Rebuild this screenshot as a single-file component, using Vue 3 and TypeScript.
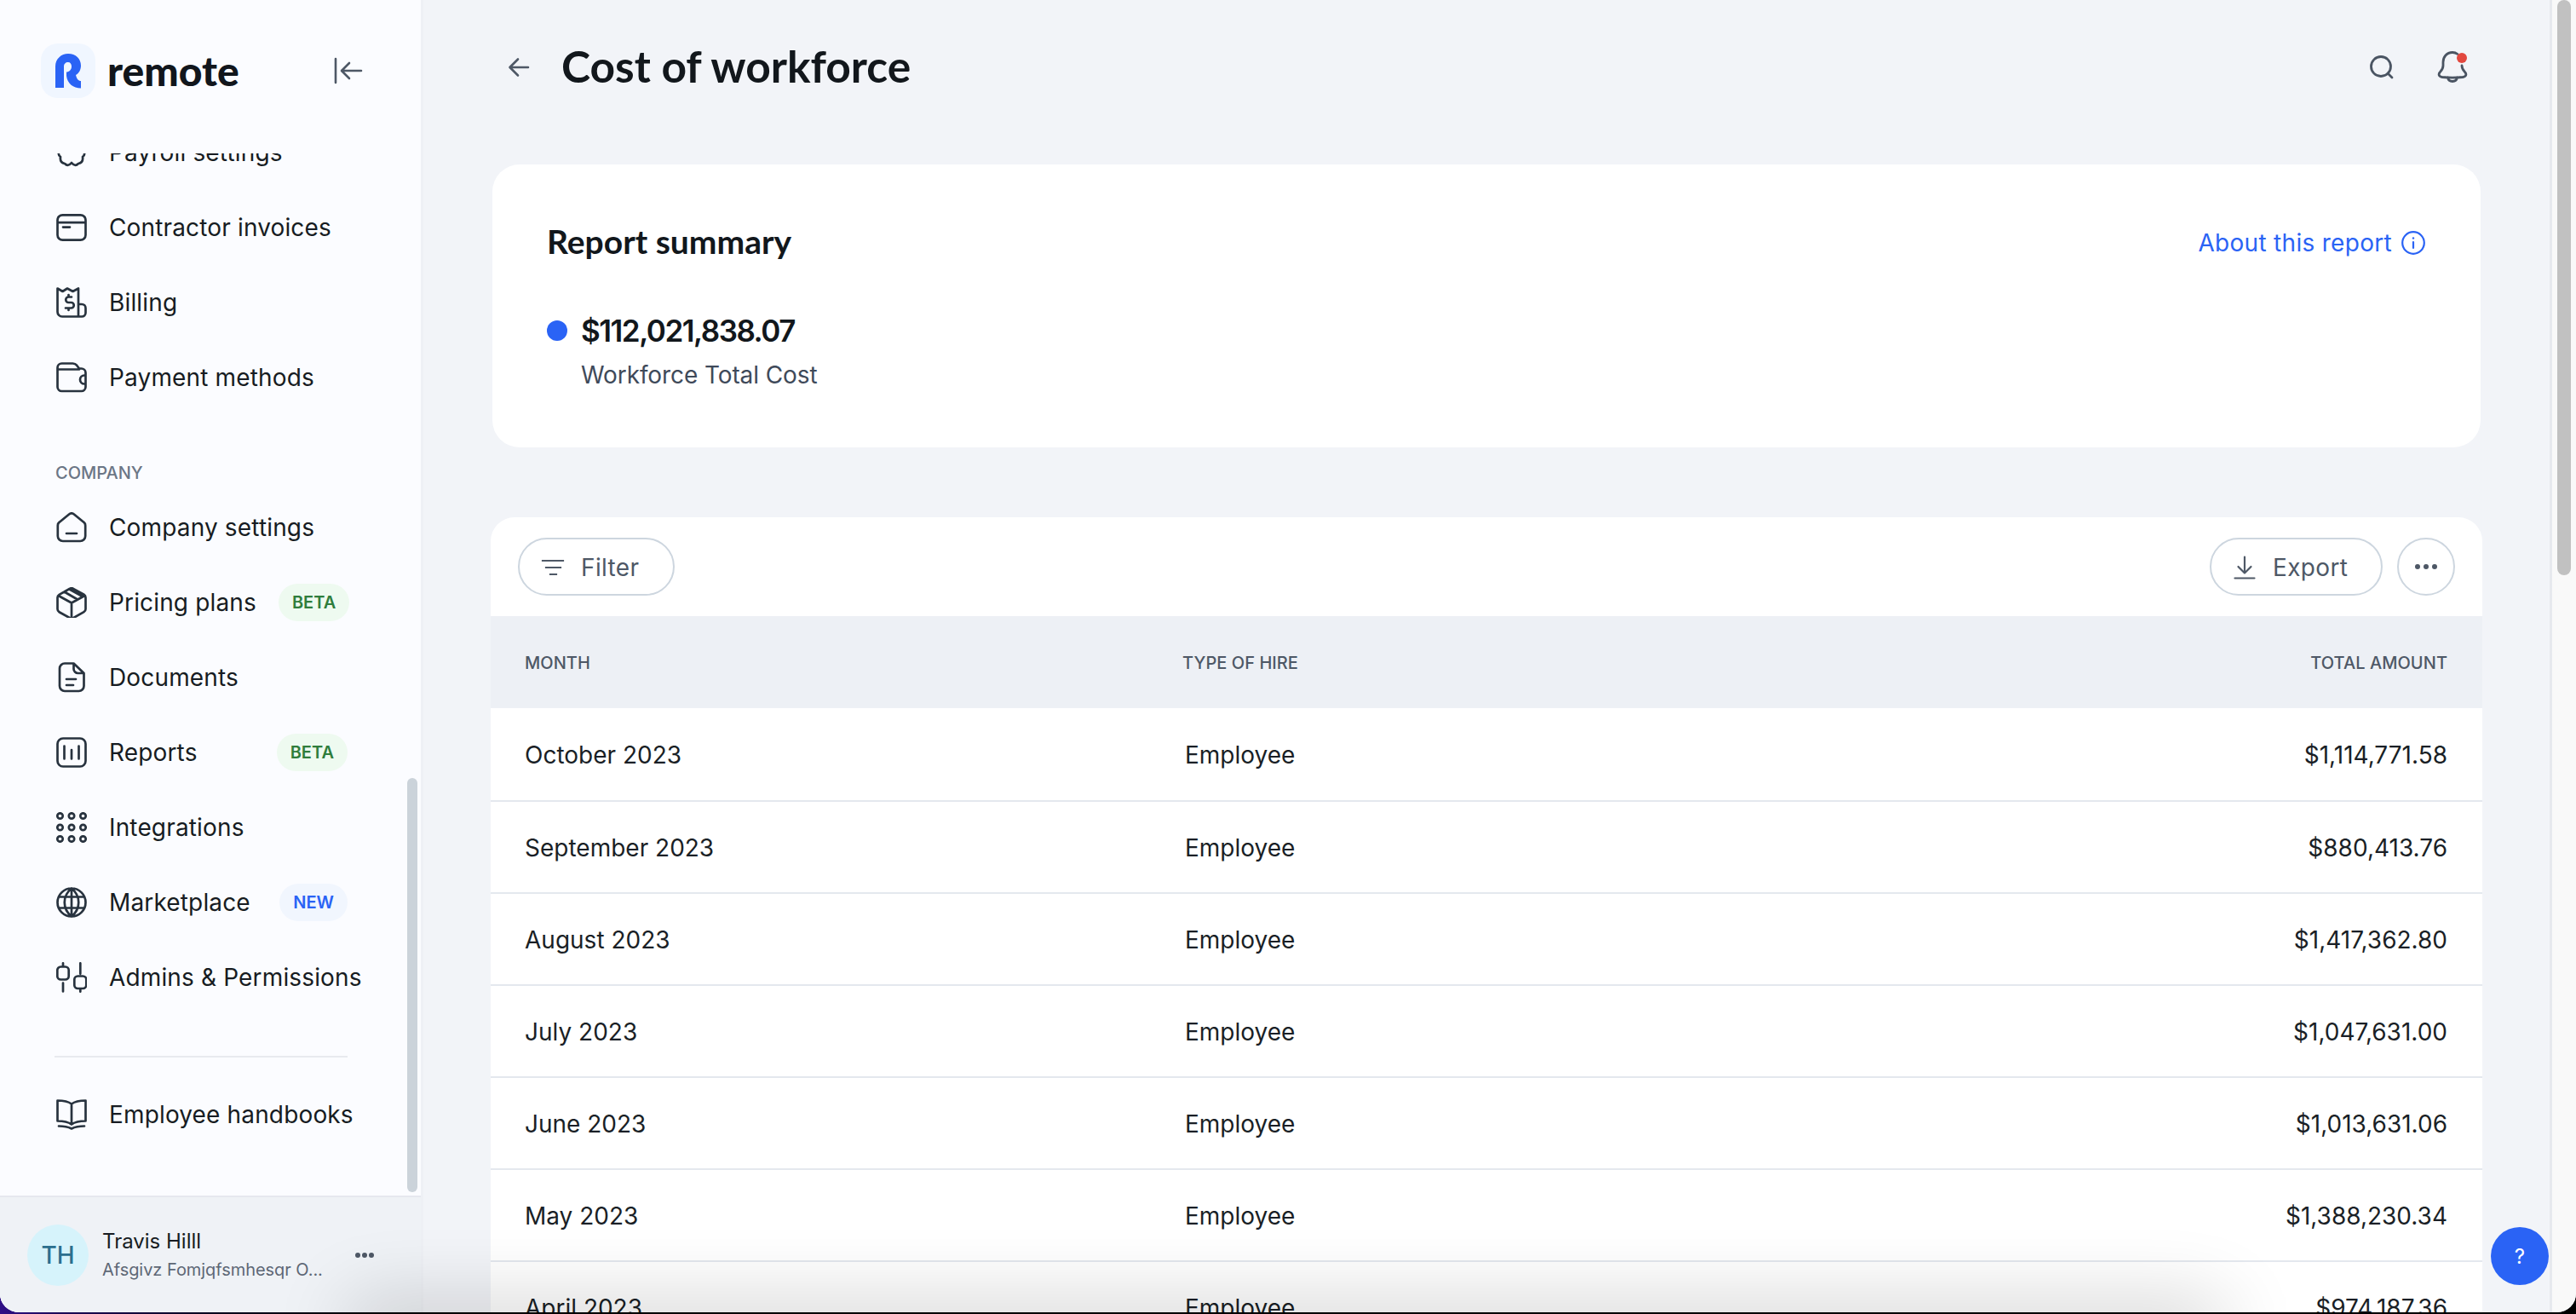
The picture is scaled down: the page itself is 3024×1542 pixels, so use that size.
<script setup lang="ts">
interface NavItem {
  label: string
  d: string
  badge?: 'NEW' | 'BETA'
}

const ring = (cx: number, cy: number, r: number): string =>
  `M${cx - r} ${cy}a${r} ${r} 0 1 0 ${2 * r} 0a${r} ${r} 0 1 0 ${-2 * r} 0`

const ringGrid = [4.5, 18, 31.5]
  .flatMap((cy) => [4.5, 18, 31.5].map((cx) => ring(cx, cy, 3.2)))
  .join('')

const financeItems: NavItem[] = [
  {
    label: 'Payroll settings',
    d: 'M3 17Q2 21 5 23Q4 30 10 31Q14 35 18 30Q22 35 26 31Q32 30 31 23Q34 21 33 17Q36 12 31 9Q31 3 25 4Q21 0 18 4Q14 0 11 4Q5 3 5 9Q0 12 3 17z'
  },
  {
    label: 'Contractor invoices',
    d: 'M7.5 3.3h21a6 6 0 0 1 6 6v17.4a6 6 0 0 1-6 6h-21a6 6 0 0 1-6-6V9.3a6 6 0 0 1 6-6zM1.5 12.2h33M8 17.6h8'
  },
  {
    label: 'Billing',
    d: 'M1.5 1.5l6 3.5 5.5-3.5 6.5 3.5 6.5-3.5v33H7a5.5 5.5 0 0 1-5.5-5.5zM26 20h4a4.5 4.5 0 0 1 4.5 4.5V30a4.5 4.5 0 0 1-4.5 4.5h-4M18 11.5H14.5a3 3 0 0 0 0 6.5h3a3 3 0 0 1 0 6.5H11M14.5 9v2.5M14.5 24.5V27'
  },
  {
    label: 'Payment methods',
    d: 'M6.5 1.5h13a6 6 0 0 1 4.6 2.2L27 7.5h2.5a5 5 0 0 1 5 5v16.5a5 5 0 0 1-5 5h-23a5 5 0 0 1-5-5V6.5a5 5 0 0 1 5-5zM1.5 8.5H27M34.5 15.5h-1.5a5 5 0 0 0 0 10h1.5'
  }
]

const companyItems: NavItem[] = [
  {
    label: 'Company settings',
    d: 'M14.8 2.7a5 5 0 0 1 6.4 0l11 9a5 5 0 0 1 2 4V28a6 6 0 0 1-6 6H7.8a6 6 0 0 1-6-6V15.7a5 5 0 0 1 2-4zM12 25h12'
  },
  {
    label: 'Pricing plans',
    badge: 'BETA',
    d: 'M16 1.8a4 4 0 0 1 4 0l12.5 7a4 4 0 0 1 2 3.5v13.4a4 4 0 0 1-2 3.5l-12.5 7a4 4 0 0 1-4 0l-12.5-7a4 4 0 0 1-2-3.5V12.3a4 4 0 0 1 2-3.5zM2.5 10L18 18.5 33.5 10M18 18.5V36M9.5 5.5L25 14.5M15.5 2.5L31 11'
  },
  {
    label: 'Documents',
    d: 'M10 1.5h10.5L32.5 13v15a6 6 0 0 1-6 6H10a6 6 0 0 1-6-6V7.5a6 6 0 0 1 6-6zM20.5 1.5V8a5 5 0 0 0 5 5h7M12 20h11M12 27h8'
  },
  {
    label: 'Reports',
    badge: 'BETA',
    d: 'M8 1.5h20a6.5 6.5 0 0 1 6.5 6.5v20a6.5 6.5 0 0 1-6.5 6.5H8A6.5 6.5 0 0 1 1.5 28V8A6.5 6.5 0 0 1 8 1.5zM9.5 10.5v15M18 15v10.5M26.5 10.5v15'
  },
  { label: 'Integrations', d: ringGrid },
  {
    label: 'Marketplace',
    badge: 'NEW',
    d: `${ring(18, 18, 16.5)}M18 1.5c-11 9-11 24 0 33M18 1.5c11 9 11 24 0 33M3 11.5h30M3 24.5h30M18 1.5v33`
  },
  {
    label: 'Admins & Permissions',
    d: 'M8 1.3v4M8 24.5v10M5.3 5.5h5.4a4 4 0 0 1 4 4v7a4 4 0 0 1-4 4H5.3a4 4 0 0 1-4-4v-7a4 4 0 0 1 4-4zM28.300 1.300v12.500M28.300 31v3.700M25.300 16.500h6a4 4 0 0 1 4 4v6.500a4 4 0 0 1-4 4h-6a4 4 0 0 1-4-4v-6.500a4 4 0 0 1 4-4z'
  }
]

const handbook: NavItem = {
  label: 'Employee handbooks',
  d: 'M18 5.500C14 2.500 8 1.500 1.500 1.500v24c6.500 0 12.500 1 16.500 4 4-3 10-4 16.500-4v-24C28 1.500 22 2.500 18 5.500zM18 5.500V29.500M3 31.500c6 0 11 1 15 3 4-2 9-3 15-3'
}

interface Row {
  month: string
  amount: string
}

const rows: Row[] = [
  { month: 'October 2023', amount: '$1,114,771.58' },
  { month: 'September 2023', amount: '$880,413.76' },
  { month: 'August 2023', amount: '$1,417,362.80' },
  { month: 'July 2023', amount: '$1,047,631.00' },
  { month: 'June 2023', amount: '$1,013,631.06' },
  { month: 'May 2023', amount: '$1,388,230.34' },
  { month: 'April 2023', amount: '$974,187.36' }
]
</script>

<template>
  <div class="page">
    <div class="window">
      <aside class="sidebar">
        <div class="brand">
          <div class="logo-tile">
            <svg width="64" height="64" viewBox="0 0 64 64">
              <path
                fill="#2a63f5"
                d="M17 52V27C17 18 24 12 32 12C41 12 47 18 47 26C47 31 44.500 35 41 37C42 41.500 44 44 47 44V52.500C38 52.500 31 47 30 38V33.500C33 33.500 36 31 36 27C36 24 34.500 22 32 22C29 22 27 24 27 27V52Z"
              />
            </svg>
          </div>
          <span class="wordmark">remote</span>
          <svg class="collapse" width="34" height="32" viewBox="0 0 34 32" fill="none" stroke="#4e5866" stroke-width="2.600" stroke-linecap="round" stroke-linejoin="round">
            <path d="M2 2v28M32 16H10M18 7l-9 9 9 9" />
          </svg>
        </div>
        <div class="nav-scroll">
          <nav class="nav">
            <a v-for="item in financeItems" :key="item.label" class="nav-item">
              <svg class="nav-icon" width="36" height="36" viewBox="0 0 36 36" fill="none"><path :d="item.d" /></svg>
              <span>{{ item.label }}</span>
              <em v-if="item.badge" class="badge" :class="item.badge.toLowerCase()">{{ item.badge }}</em>
            </a>
            <div class="group-label">COMPANY</div>
            <a v-for="item in companyItems" :key="item.label" class="nav-item">
              <svg class="nav-icon" width="36" height="36" viewBox="0 0 36 36" fill="none"><path :d="item.d" /></svg>
              <span>{{ item.label }}</span>
              <em v-if="item.badge" class="badge" :class="item.badge.toLowerCase()">{{ item.badge }}</em>
            </a>
            <hr class="divider" />
            <a class="nav-item">
              <svg class="nav-icon" width="36" height="36" viewBox="0 0 36 36" fill="none"><path :d="handbook.d" /></svg>
              <span>{{ handbook.label }}</span>
            </a>
          </nav>
          <div class="side-thumb"></div>
        </div>
        <div class="user">
          <div class="avatar">TH</div>
          <div class="user-text">
            <div class="user-name">Travis Hilll</div>
            <div class="user-org">Afsgivz Fomjqfsmhesqr O...</div>
          </div>
          <svg class="user-more" width="24" height="8" viewBox="0 0 24 8" fill="#4e5866">
            <circle cx="4" cy="4" r="3" /><circle cx="12" cy="4" r="3" /><circle cx="20" cy="4" r="3" />
          </svg>
        </div>
      </aside>

      <main class="main">
        <header class="topbar">
          <svg width="26" height="26" viewBox="0 0 26 26" fill="none" stroke="#4e5866" stroke-width="2.600" stroke-linecap="round" stroke-linejoin="round">
            <path d="M24 13H3M12 3.500L2.500 13l9.500 9.500" />
          </svg>
          <h1 class="title">Cost of workforce</h1>
          <div class="top-actions">
            <svg width="28" height="28" viewBox="0 0 28 28" fill="none" stroke="#4a5462" stroke-width="2.800" stroke-linecap="round">
              <circle cx="13" cy="13" r="11.500" /><path d="M21 21l5 5" />
            </svg>
            <span class="bell">
              <svg width="36" height="38" viewBox="0 0 36 38" fill="none" stroke="#4a5462" stroke-width="2.800" stroke-linecap="round" stroke-linejoin="round">
                <path d="M24 3.500C22 2 20 1.500 18 1.500C11 1.500 7 7 7 13v4c0 3-1 5-3.500 7.500C1 27 2 30 6 30.500c8 .8 16 .8 24 0 4-.5 5-3.500 2.500-6-2-2-3.500-4-3.500-7.500M12.500 31c1 6 10 6 11 0" />
              </svg>
              <i class="bell-dot"></i>
            </span>
          </div>
        </header>

        <section class="summary">
          <div class="summary-head">
            <h2 class="summary-title">Report summary</h2>
            <a class="about">
              About this report
              <svg width="28" height="28" viewBox="0 0 28 28" fill="none" stroke="#2a63f5" stroke-width="2.200" stroke-linecap="round">
                <circle cx="14" cy="14" r="12.800" /><path d="M14 13v7" /><circle cx="14" cy="8.500" r="1.200" fill="#2a63f5" stroke="none" />
              </svg>
            </a>
          </div>
          <div class="metric">
            <i class="metric-dot"></i>
            <div>
              <div class="metric-value">$112,021,838.07</div>
              <div class="metric-label">Workforce Total Cost</div>
            </div>
          </div>
        </section>

        <section class="report">
          <div class="toolbar">
            <button class="pill filter">
              <svg width="28" height="22" viewBox="0 0 28 22" fill="none" stroke="#4e5866" stroke-width="2.200" stroke-linecap="square">
                <path d="M2 3h24M6 11h17M11 19h7" />
              </svg>
              Filter
            </button>
            <button class="pill export">
              <svg width="26" height="28" viewBox="0 0 26 28" fill="none" stroke="#4e5866" stroke-width="2.200" stroke-linecap="round" stroke-linejoin="round">
                <path d="M13 1.500v19M5.500 13l7.500 7.500L20.500 13M1.500 26.500h23" />
              </svg>
              Export
            </button>
            <button class="pill more">
              <svg width="28" height="8" viewBox="0 0 28 8" fill="#4e5866">
                <circle cx="4" cy="4" r="3" /><circle cx="14" cy="4" r="3" /><circle cx="24" cy="4" r="3" />
              </svg>
            </button>
          </div>
          <div class="table-head">
            <span class="col-month">MONTH</span>
            <span class="col-type">TYPE OF HIRE</span>
            <span class="col-amount">TOTAL AMOUNT</span>
          </div>
          <div v-for="row in rows" :key="row.month" class="table-row">
            <span class="col-month">{{ row.month }}</span>
            <span class="col-type cell-type">Employee</span>
            <span class="col-amount">{{ row.amount }}</span>
          </div>
        </section>

        <button class="help">?</button>
      </main>

      <div class="gutter"><div class="gutter-thumb"></div></div>
      <div class="dock-shadow"></div>
    </div>
  </div>
</template>

<style>
html,
body {
  margin: 0;
  overflow: hidden;
}
</style>

<style scoped>
.page {
  width: 3024px;
  height: 1542px;
  background: linear-gradient(90deg, #2f0f86 0, #1c0b58 70px, #07041a 260px, #000 500px);
  font-family: Inter, 'Liberation Sans', sans-serif;
  color: #171c22;
}
.window {
  position: relative;
  display: flex;
  width: 3024px;
  height: 1540px;
  overflow: hidden;
  border-radius: 0 0 22px 22px;
  background: #f2f4f8;
}
.sidebar {
  display: flex;
  flex-direction: column;
  flex: none;
  box-sizing: border-box;
  width: 497px;
  border-right: 3px solid #eef0f5;
  background: #fbfcff;
}
.brand {
  display: flex;
  align-items: center;
  flex: none;
  box-sizing: border-box;
  height: 180px;
  padding: 0 68px 14px 48px;
}
.logo-tile {
  flex: none;
  width: 64px;
  height: 64px;
  border-radius: 20px;
  background: #f0f6ff;
}
.wordmark {
  margin-left: 14px;
  font-family: Lato, Inter, sans-serif;
  font-size: 48px;
  font-weight: 900;
  line-height: 64px;
  color: #11161c;
}
.collapse {
  margin-left: auto;
}
.nav-scroll {
  position: relative;
  flex: 1;
  min-height: 0;
  overflow: hidden;
}
.nav {
  display: flex;
  flex-direction: column;
  margin-top: -45px;
  padding: 0 86px 0 66px;
}
.nav-item {
  display: flex;
  align-items: center;
  flex: none;
  gap: 26px;
  height: 88px;
  font-size: 28px;
  letter-spacing: 0.15px;
  color: #171c22;
  white-space: nowrap;
}
.nav-icon {
  flex: none;
  stroke: #28333f;
  stroke-width: 2.700;
  stroke-linecap: round;
  stroke-linejoin: round;
}
.badge {
  margin-left: auto;
  padding: 0 16px;
  border-radius: 22px;
  font-size: 20px;
  font-style: normal;
  font-weight: 600;
  letter-spacing: 0;
  line-height: 44px;
}
.badge.new {
  color: #2a63f5;
  background: #f1f6fe;
}
.badge.beta {
  color: #2f7d3c;
  background: #eefaf0;
}
.group-label {
  margin-left: -1px;
  padding: 56px 0 8px;
  font-size: 20px;
  font-weight: 500;
  line-height: 24px;
  color: #6b7686;
}
.divider {
  align-self: stretch;
  height: 2px;
  margin: 48px 0 23px -2px;
  border: 0;
  background: #e8eaef;
}
.side-thumb {
  position: absolute;
  top: 733px;
  left: 478px;
  width: 12px;
  height: 486px;
  border-radius: 6px;
  background: #cbd3da;
}
.user {
  display: flex;
  align-items: center;
  flex: none;
  box-sizing: border-box;
  height: 137px;
  padding: 0 54px 0 32px;
  border-top: 2px solid #e6e8ee;
  background: #eff2f6;
}
.avatar {
  flex: none;
  width: 72px;
  height: 72px;
  border-radius: 50%;
  background: #d6f3fb;
  color: #2c6f8e;
  font-size: 28px;
  font-weight: 500;
  line-height: 72px;
  text-align: center;
}
.user-text {
  flex: 1;
  min-width: 0;
  margin-left: 16px;
}
.user-name {
  font-size: 24px;
  line-height: 34px;
  color: #171c22;
}
.user-org {
  margin-top: 1px;
  font-size: 20px;
  letter-spacing: -0.05px;
  line-height: 30px;
  color: #5d6775;
  white-space: nowrap;
}
.user-more {
  flex: none;
}
.main {
  position: relative;
  flex: 1;
  min-width: 0;
  box-sizing: border-box;
  padding: 0 79px;
  overflow: hidden;
}
.topbar {
  display: flex;
  align-items: center;
  box-sizing: border-box;
  height: 193px;
  padding: 0 17px 35px 20px;
}
.title {
  margin: -4px 0 0 37px;
  font-family: Lato, Inter, sans-serif;
  font-size: 51.5px;
  font-weight: 700;
  line-height: 56px;
  color: #12171c;
}
.top-actions {
  display: flex;
  align-items: center;
  gap: 51px;
  margin-left: auto;
}
.bell {
  position: relative;
  display: block;
  height: 38px;
}
.bell-dot {
  position: absolute;
  top: 2px;
  right: 1px;
  width: 12px;
  height: 12px;
  border-radius: 50%;
  background: #e2483f;
}
.summary {
  box-sizing: border-box;
  height: 332px;
  margin: 0 2px;
  padding: 70px 65px 0 64px;
  border-radius: 32px;
  background: #fff;
}
.summary-head {
  display: flex;
  align-items: center;
  justify-content: space-between;
  height: 40px;
}
.summary-title {
  margin: 0;
  font-family: Lato, Inter, sans-serif;
  font-size: 39px;
  font-weight: 700;
  line-height: 40px;
  color: #12171c;
}
.about {
  display: flex;
  align-items: center;
  gap: 11px;
  margin-top: 4px;
  font-size: 28px;
  letter-spacing: 0.3px;
  color: #2a63f5;
}
.metric {
  display: flex;
  gap: 16px;
  margin-top: 62px;
}
.metric-dot {
  flex: none;
  width: 24px;
  height: 24px;
  margin-top: 11px;
  border-radius: 50%;
  background: #2a63f5;
}
.metric-value {
  font-size: 35px;
  font-weight: 600;
  letter-spacing: -1.5px;
  line-height: 46px;
  color: #12171c;
}
.metric-label {
  margin-top: 12px;
  font-size: 28px;
  letter-spacing: -0.1px;
  line-height: 34px;
  color: #3f4a5a;
}
.report {
  margin-top: 82px;
  overflow: hidden;
  border-radius: 28px 28px 0 0;
  background: #fff;
}
.toolbar {
  display: flex;
  align-items: center;
  gap: 17px;
  box-sizing: border-box;
  height: 116px;
  padding: 0 32px;
}
.pill {
  display: flex;
  align-items: center;
  justify-content: flex-start;
  gap: 19px;
  box-sizing: border-box;
  height: 68px;
  padding: 2px 0 0 25px;
  border: 2px solid #cdd6df;
  border-radius: 34px;
  background: #fff;
  font-family: inherit;
  font-size: 28px;
  letter-spacing: 0.35px;
  color: #4e5866;
}
.filter {
  width: 184px;
}
.export {
  width: 203px;
  gap: 20px;
  margin-left: auto;
  padding-left: 26px;
}
.more {
  justify-content: center;
  width: 68px;
  padding: 0;
}
.table-head,
.table-row {
  display: flex;
  align-items: center;
  box-sizing: border-box;
  padding: 0 41px 0 40px;
}
.table-head {
  height: 108px;
  padding-top: 2px;
  background: #edf0f5;
  color: #4e5866;
  font-size: 20px;
  font-weight: 500;
  letter-spacing: 0.05px;
}
.table-row {
  height: 108px;
  padding-top: 2px;
  border-bottom: 2px solid #e4e8ee;
  font-size: 28px;
  color: #1a1f26;
}
.table-head + .table-row {
  height: 110px;
}
.col-month {
  flex: none;
  width: 772px;
}
.col-type {
  flex: 1;
}
.cell-type {
  padding-left: 3px;
}
.col-amount {
  flex: none;
  text-align: right;
}
.help {
  position: absolute;
  top: 1440px;
  left: 2427px;
  width: 68px;
  height: 68px;
  padding: 0;
  border: 0;
  border-radius: 50%;
  background: #2a63f5;
  color: #fff;
  font-family: inherit;
  font-size: 24px;
}
.gutter {
  position: relative;
  flex: none;
  box-sizing: border-box;
  width: 31px;
  border-left: 3px solid #e7e9ee;
  background: #f9f9f9;
}
.gutter-thumb {
  position: absolute;
  top: 0;
  left: 6px;
  width: 16px;
  height: 675px;
  border-radius: 8px;
  background: #c1c1c1;
}
.dock-shadow {
  position: absolute;
  left: 420px;
  right: 424px;
  bottom: -40px;
  height: 40px;
  box-shadow: 0 0 90px 10px rgba(0, 0, 0, 0.2);
  pointer-events: none;
}
</style>
